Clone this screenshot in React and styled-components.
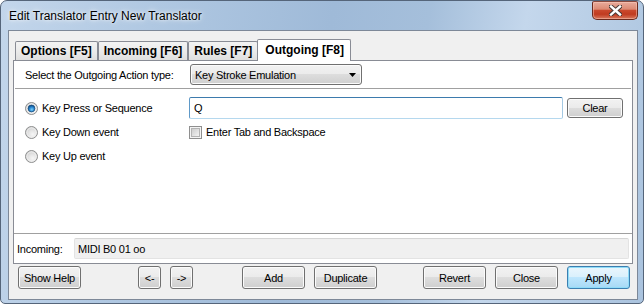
import styled, { createGlobalStyle } from "styled-components";

const GlobalStyle = createGlobalStyle`
  html, body {
    margin: 0;
    padding: 0;
    background: #ffffff;
  }
  body {
    font-family: "Liberation Sans", Arial, sans-serif;
    font-size: 11px;
    letter-spacing: -0.25px;
    color: #000;
  }
  * {
    box-sizing: border-box;
  }
`;

const Window = styled.div`
  width: 644px;
  height: 304px;
  display: flex;
  flex-direction: column;
  border: 1px solid #55657a;
  border-radius: 7px 7px 5px 5px;
  overflow: hidden;
  background: linear-gradient(
    100deg,
    #c3d6eb 0%,
    #b0c8e2 22%,
    #9fbad8 48%,
    #a5bfdb 62%,
    #c4d7ec 76%,
    #aac3de 100%
  );
`;

const TitleBar = styled.div`
  height: 29px;
  flex: none;
  display: flex;
  justify-content: space-between;
  padding: 0 5px 0 8px;
`;

const Title = styled.div`
  align-self: center;
  font-size: 12px;
  letter-spacing: 0;
  color: #000;
  text-shadow: 0 0 6px rgba(255, 255, 255, 0.9), 0 0 3px rgba(255, 255, 255, 0.8);
`;

const CloseButton = styled.div`
  width: 46px;
  height: 19px;
  display: flex;
  align-items: center;
  justify-content: center;
  border: 1px solid #6a2a1e;
  border-top-color: #8a4a3e;
  border-radius: 2px 2px 5px 5px;
  background: linear-gradient(
    #e8ab9c 0%,
    #dc8a74 42%,
    #c9482c 50%,
    #c03b20 72%,
    #d8785d 100%
  );
  box-shadow: inset 0 0 0 1px rgba(255, 210, 195, 0.45);
`;

const Client = styled.div`
  flex: 1;
  display: flex;
  flex-direction: column;
  margin: 0 5px 3px 7px;
  border: 1px solid #7d8898;
  background: #f0f0f0;
  padding: 8px 4px 0 4px;
`;

const TabStrip = styled.div`
  height: 21px;
  display: flex;
  align-items: flex-end;
  padding-left: 2px;
`;

const Tab = styled.div`
  position: relative;
  display: flex;
  align-items: center;
  height: ${(p) => (p.$active ? "22px" : "19px")};
  margin: ${(p) => (p.$active ? "0 -2px -1px -1px" : "0")};
  padding: ${(p) => (p.$active ? "0 6px 2px 7px" : "0 5px")};
  border: 1px solid #898c95;
  border-bottom: none;
  border-radius: 2px 2px 0 0;
  background: ${(p) =>
    p.$active ? "#ffffff" : "linear-gradient(#f3f3f3, #ebebeb 50%, #dfdfdf)"};
  z-index: ${(p) => (p.$active ? 1 : 0)};
  font-size: 12px;
  font-weight: bold;
  letter-spacing: 0;
  white-space: nowrap;
`;

const Panel = styled.div`
  height: 204px;
  display: flex;
  flex-direction: column;
  border: 1px solid #898c95;
  background: #ffffff;
`;

const SelectRow = styled.div`
  display: flex;
  align-items: center;
  height: 21px;
  margin-top: 3px;
  padding-left: 11px;
`;

const FieldLabel = styled.div`
  width: ${(p) => p.$width}px;
  flex: none;
  white-space: nowrap;
`;

const Dropdown = styled.div`
  width: 172px;
  height: 21px;
  display: flex;
  align-items: center;
  justify-content: space-between;
  padding: 0 5px 0 4px;
  border: 1px solid #707070;
  border-radius: 3px;
  background: linear-gradient(#f2f2f2 0%, #ebebeb 49%, #dddddd 50%, #cfcfcf 100%);
  box-shadow: inset 0 0 0 1px #fbfbfb;
`;

const Rule = styled.div`
  height: 1px;
  flex: none;
  background: #a0a0a0;
  margin: ${(p) => p.$margin || "0"};
`;

const OptionGrid = styled.div`
  display: grid;
  grid-template-columns: 160px 1fr 56px;
  grid-auto-rows: 24px;
  column-gap: 4px;
  align-items: center;
  margin-top: 7px;
  padding: 0 9px 0 11px;
`;

const Choice = styled.label`
  grid-column: 1;
  display: flex;
  align-items: center;
  gap: 4px;
  white-space: nowrap;
`;

const TextBox = styled.div`
  height: ${(p) => (p.$readOnly ? "21px" : "22px")};
  display: flex;
  align-items: center;
  padding-left: ${(p) => (p.$readOnly ? "3px" : "4px")};
  border: 1px solid;
  border-radius: 2px;
  border-color: ${(p) =>
    p.$readOnly
      ? "#d5d5d5 #e3e3e3 #e3e3e3 #e3e3e3"
      : "#3d7bad #a4c9e3 #b5d8ee #5f99c8"};
  background: ${(p) => (p.$readOnly ? "#f0f0f0" : "#ffffff")};
  flex: 1;
  white-space: nowrap;
`;

const CheckField = styled.label`
  grid-column: 2 / 4;
  display: flex;
  align-items: center;
  gap: 4px;
  white-space: nowrap;
`;

const Spacer = styled.div`
  flex: 1;
`;

const IncomingRow = styled.div`
  display: flex;
  align-items: center;
  margin: 4px 3px 4px 3px;
`;

const ButtonBar = styled.div`
  display: flex;
  margin-top: 2px;
  padding-left: 5px;
`;

const ButtonGroup = styled.div`
  display: flex;
  gap: 9px;
  margin-left: ${(p) => p.$offset}px;
`;

const Button = styled.div`
  width: ${(p) => p.$width || 63}px;
  height: ${(p) => p.$height || 23}px;
  display: flex;
  align-items: center;
  justify-content: center;
  border: 1px solid ${(p) => (p.$default ? "#3c7fb1" : "#707070")};
  border-radius: 3px;
  background: ${(p) =>
    p.$default
      ? "linear-gradient(#eaf6fd 0%, #d9f0fc 49%, #bee6fd 50%, #a7d9f5 100%)"
      : "linear-gradient(#f2f2f2 0%, #ebebeb 49%, #dddddd 50%, #cfcfcf 100%)"};
  box-shadow: inset 0 0 0 1px ${(p) => (p.$default ? "#8fdcf8" : "#fbfbfb")};
  white-space: nowrap;
`;

const CloseGlyph = () => (
  <svg width="13" height="11" viewBox="0 0 13 11">
    <path
      d="M2 1.5 L11 9.5 M11 1.5 L2 9.5"
      stroke="#4b3a36"
      strokeWidth="4.4"
      strokeLinecap="square"
    />
    <path
      d="M2 1.5 L11 9.5 M11 1.5 L2 9.5"
      stroke="#ffffff"
      strokeWidth="2.4"
      strokeLinecap="square"
    />
  </svg>
);

const Radio = ({ checked, id }) => (
  <svg width="13" height="13" viewBox="0 0 13 13">
    <defs>
      <radialGradient id={`rb-${id}`} cx="0.6" cy="0.65" r="0.6">
        <stop offset="0" stopColor="#f6f6f6" />
        <stop offset="0.6" stopColor="#e2e2e2" />
        <stop offset="1" stopColor="#cfcfcf" />
      </radialGradient>
      <radialGradient id={`rd-${id}`} cx="0.55" cy="0.65" r="0.6">
        <stop offset="0" stopColor="#7fd0f8" />
        <stop offset="0.55" stopColor="#2a8ad4" />
        <stop offset="1" stopColor="#0f4f8e" />
      </radialGradient>
    </defs>
    <circle cx="6.5" cy="6.5" r="6" fill={`url(#rb-${id})`} stroke="#8e8f8f" />
    <circle cx="6.5" cy="6.5" r="4.6" fill="none" stroke="#f4f4f4" strokeWidth="0.8" />
    {checked && (
      <circle cx="6.5" cy="6.5" r="3.4" fill={`url(#rd-${id})`} stroke="#1b4f7e" strokeWidth="0.8" />
    )}
  </svg>
);

const CheckBox = () => (
  <svg width="13" height="13" viewBox="0 0 13 13">
    <defs>
      <linearGradient id="cbfill" x1="0" y1="0" x2="1" y2="1">
        <stop offset="0" stopColor="#cbcbcb" />
        <stop offset="1" stopColor="#f5f5f5" />
      </linearGradient>
    </defs>
    <rect x="0.5" y="0.5" width="12" height="12" fill="#f4f4f4" stroke="#8f8f8f" />
    <rect x="2.5" y="2.5" width="8" height="8" fill="url(#cbfill)" stroke="#b4b4b4" />
  </svg>
);

const DownArrow = () => (
  <svg width="7" height="4" viewBox="0 0 7 4">
    <path d="M0 0 H7 L3.5 4 Z" fill="#000" />
  </svg>
);

const tabs = [
  { label: "Options [F5]" },
  { label: "Incoming [F6]" },
  { label: "Rules [F7]" },
  { label: "Outgoing [F8]", active: true },
];

export default function App() {
  return (
    <>
      <GlobalStyle />
      <Window>
        <TitleBar>
          <Title>Edit Translator Entry New Translator</Title>
          <CloseButton>
            <CloseGlyph />
          </CloseButton>
        </TitleBar>
        <Client>
          <TabStrip>
            {tabs.map((t) => (
              <Tab key={t.label} $active={t.active}>
                {t.label}
              </Tab>
            ))}
          </TabStrip>
          <Panel>
            <SelectRow>
              <FieldLabel $width={165}>Select the Outgoing Action type:</FieldLabel>
              <Dropdown>
                <span>Key Stroke Emulation</span>
                <DownArrow />
              </Dropdown>
            </SelectRow>
            <Rule $margin="3px 1px 0" />
            <OptionGrid>
              <Choice>
                <Radio id="press" checked />
                Key Press or Sequence
              </Choice>
              <TextBox>Q</TextBox>
              <Button $width={56} $height={20}>
                Clear
              </Button>
              <Choice>
                <Radio id="down" />
                Key Down event
              </Choice>
              <CheckField>
                <CheckBox />
                Enter Tab and Backspace
              </CheckField>
              <Choice>
                <Radio id="up" />
                Key Up event
              </Choice>
            </OptionGrid>
            <Spacer />
            <Rule />
            <IncomingRow>
              <FieldLabel $width={57}>Incoming:</FieldLabel>
              <TextBox $readOnly>MIDI B0 01 oo</TextBox>
            </IncomingRow>
          </Panel>
          <ButtonBar>
            <ButtonGroup $offset={0}>
              <Button>Show Help</Button>
            </ButtonGroup>
            <ButtonGroup $offset={57}>
              <Button $width={23}>&lt;-</Button>
              <Button $width={23}>-&gt;</Button>
            </ButtonGroup>
            <ButtonGroup $offset={49}>
              <Button>Add</Button>
              <Button>Duplicate</Button>
            </ButtonGroup>
            <ButtonGroup $offset={46}>
              <Button>Revert</Button>
              <Button>Close</Button>
              <Button $default>Apply</Button>
            </ButtonGroup>
          </ButtonBar>
        </Client>
      </Window>
    </>
  );
}
